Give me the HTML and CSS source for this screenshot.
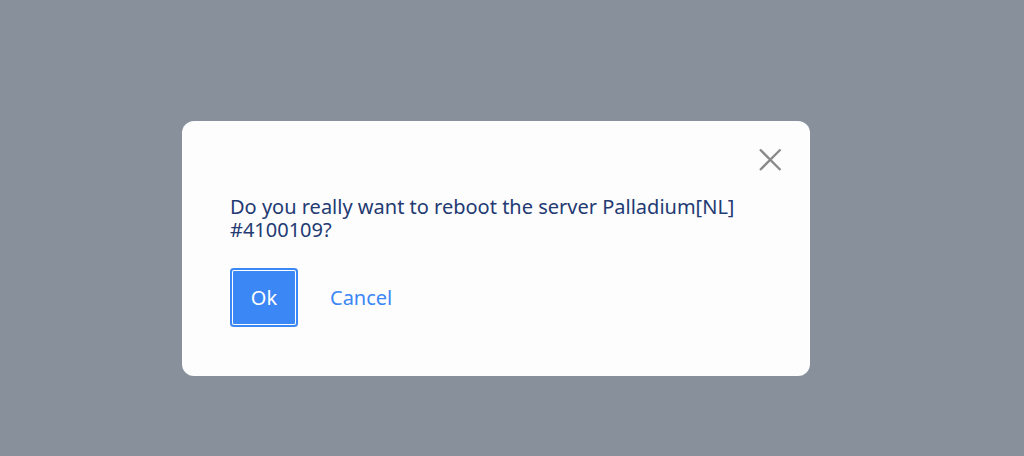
FILE: index.html
```html
<!DOCTYPE html>
<html>
<head>
<meta charset="utf-8">
<link rel="stylesheet" href="styles.css">
</head>
<body>
<div class="overlay">
  <div class="modal">
    <div class="modal-head">
      <button class="close" aria-label="Close">
        <svg width="24" height="24" viewBox="0 0 24 24"><path d="M2 1.5 L22.5 22 M22.5 1.5 L2 22" stroke="#8a8a8a" stroke-width="2.3" fill="none"/></svg>
      </button>
    </div>
    <p class="message">Do you really want to reboot the server Palladium[NL] #4100109?</p>
    <div class="actions">
      <button class="btn-ok">Ok</button>
      <button class="btn-cancel">Cancel</button>
    </div>
  </div>
</div>
</body>
</html>
```
FILE: styles.css
```css
html, body {
  margin: 0;
  padding: 0;
  height: 100%;
}
body {
  background: #87909b;
  font-family: "Noto Sans", "Open Sans", sans-serif;
}
.overlay {
  padding: 121px 0 0 182px;
}
.modal {
  box-sizing: border-box;
  width: 628px;
  height: 255px;
  background: #fdfdfe;
  border-radius: 12px;
  padding: 27px 28px 0 48px;
}
.modal-head {
  display: flex;
  justify-content: flex-end;
}
.close {
  background: none;
  border: 0;
  padding: 0;
  width: 24px;
  height: 24px;
  cursor: pointer;
}
.close svg { display: block; }
.message {
  margin: 23px 40px 0 0;
  font-size: 20px;
  line-height: 23px;
  color: #233a72;
}
.actions {
  display: flex;
  align-items: center;
  gap: 32px;
  margin-top: 27px;
}
.btn-ok {
  box-sizing: border-box;
  width: 68px;
  height: 59px;
  background: #3b87f6;
  color: #fff;
  border: 0;
  border-radius: 4px;
  box-shadow: inset 0 0 0 2px #3b87f6, inset 0 0 0 3px #fff;
  font-family: inherit;
  font-size: 20px;
  padding: 0;
}
.btn-cancel {
  background: none;
  border: 0;
  padding: 0;
  color: #3b87f6;
  font-family: inherit;
  font-size: 20px;
}
```
